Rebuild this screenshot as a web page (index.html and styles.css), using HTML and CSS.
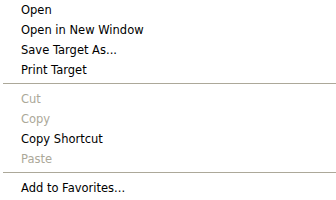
FILE: index.html
```html
<!DOCTYPE html>
<html lang="en">
<head>
  <meta charset="UTF-8" />
  <title>Context Menu</title>
  <link rel="stylesheet" href="styles.css">
</head>
<body>

<ul class="menu">
  <li class="item">Open</li>
  <li class="item">Open in New Window</li>
  <li class="item">Save Target As...</li>
  <li class="item">Print Target</li>
  <li class="sep"></li>
  <li class="item disabled">Cut</li>
  <li class="item disabled">Copy</li>
  <li class="item">Copy Shortcut</li>
  <li class="item disabled">Paste</li>
  <li class="sep"></li>
  <li class="item">Add to Favorites...</li>
</ul>

</body>
</html>
```

FILE: styles.css
```css
* {
  margin: 0;
  padding: 0;
  box-sizing: border-box;
}

html, body {
  background: #fff;
  color: #000;
  font-family: 'DejaVu Sans', Verdana, sans-serif;
  font-size: 11.5px;
}

.menu {
  list-style: none;
  width: 336px;
}

.item {
  height: 20px;
  line-height: 21px;
  padding-left: 21px;
  white-space: nowrap;
}

.item.disabled {
  color: #aca899;
}

/* separator line */
.sep {
  height: 9px;
  padding-top: 3px;
  margin-left: 3px;
}

.sep::before {
  content: '';
  display: block;
  height: 1px;
  background: #aca899;
}
```
